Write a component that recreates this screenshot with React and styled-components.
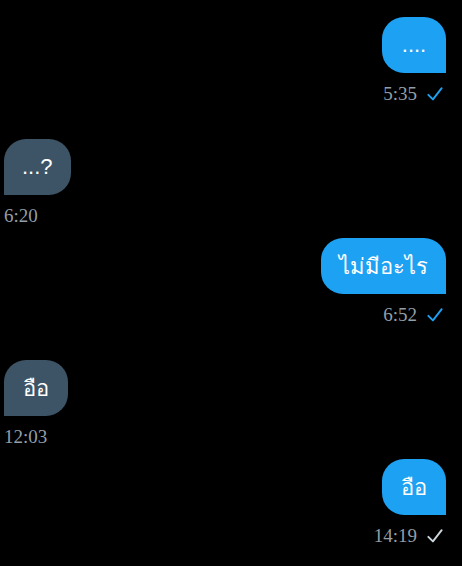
import React from "react";
import styled, { createGlobalStyle } from "styled-components";

const Global = createGlobalStyle`
  html, body { margin: 0; padding: 0; background: #000; }
  body { font-family: "Liberation Sans", "Noto Sans", sans-serif; }
`;

const Page = styled.div`
  width: 462px;
  min-height: 566px;
  background: #000;
  box-sizing: border-box;
  padding: 17px 16px 0 4px;
  display: flex;
  flex-direction: column;
`;

const Message = styled.div`
  display: flex;
  flex-direction: column;
  align-items: ${(p) => (p.$out ? "flex-end" : "flex-start")};
  margin-bottom: ${(p) => (p.$out ? "34px" : "11px")};
`;

const Bubble = styled.div`
  height: 56px;
  box-sizing: border-box;
  padding: 0 18px;
  display: flex;
  align-items: center;
  justify-content: center;
  min-width: 64px;
  color: #fff;
  font-size: 22px;
  background: ${(p) => (p.$out ? "#1da1f2" : "#3d5466")};
  border-radius: ${(p) => (p.$out ? "22px 22px 0 22px" : "22px 22px 22px 0")};
`;

const Meta = styled.div`
  margin-top: 10px;
  height: 22px;
  display: flex;
  align-items: center;
  gap: 8px;
  padding-right: ${(p) => (p.$out ? "1px" : "0")};
`;

const Time = styled.span`
  font-family: "Liberation Serif", "DejaVu Serif", serif;
  font-size: 19px;
  color: #939ea6;
`;

const Check = ({ color }) => (
  <svg width="20" height="20" viewBox="0 0 24 24" fill="none" stroke={color} strokeWidth="2.3" strokeLinecap="round" strokeLinejoin="round">
    <path d="M4 13 L9.5 18.5 L20 5" />
  </svg>
);

const messages = [
  { out: true, text: "....", time: "5:35", check: "#1da1f2" },
  { out: false, text: "...?", time: "6:20" },
  { out: true, text: "ไม่มีอะไร", time: "6:52", check: "#1da1f2" },
  { out: false, text: "อือ", time: "12:03" },
  { out: true, text: "อือ", time: "14:19", check: "#ccd6dd" },
];

export default function App() {
  return (
    <>
      <Global />
      <Page>
        {messages.map((m, i) => (
          <Message key={i} $out={m.out}>
            <Bubble $out={m.out}>{m.text}</Bubble>
            <Meta $out={m.out}>
              <Time>{m.time}</Time>
              {m.out && <Check color={m.check} />}
            </Meta>
          </Message>
        ))}
      </Page>
    </>
  );
}
